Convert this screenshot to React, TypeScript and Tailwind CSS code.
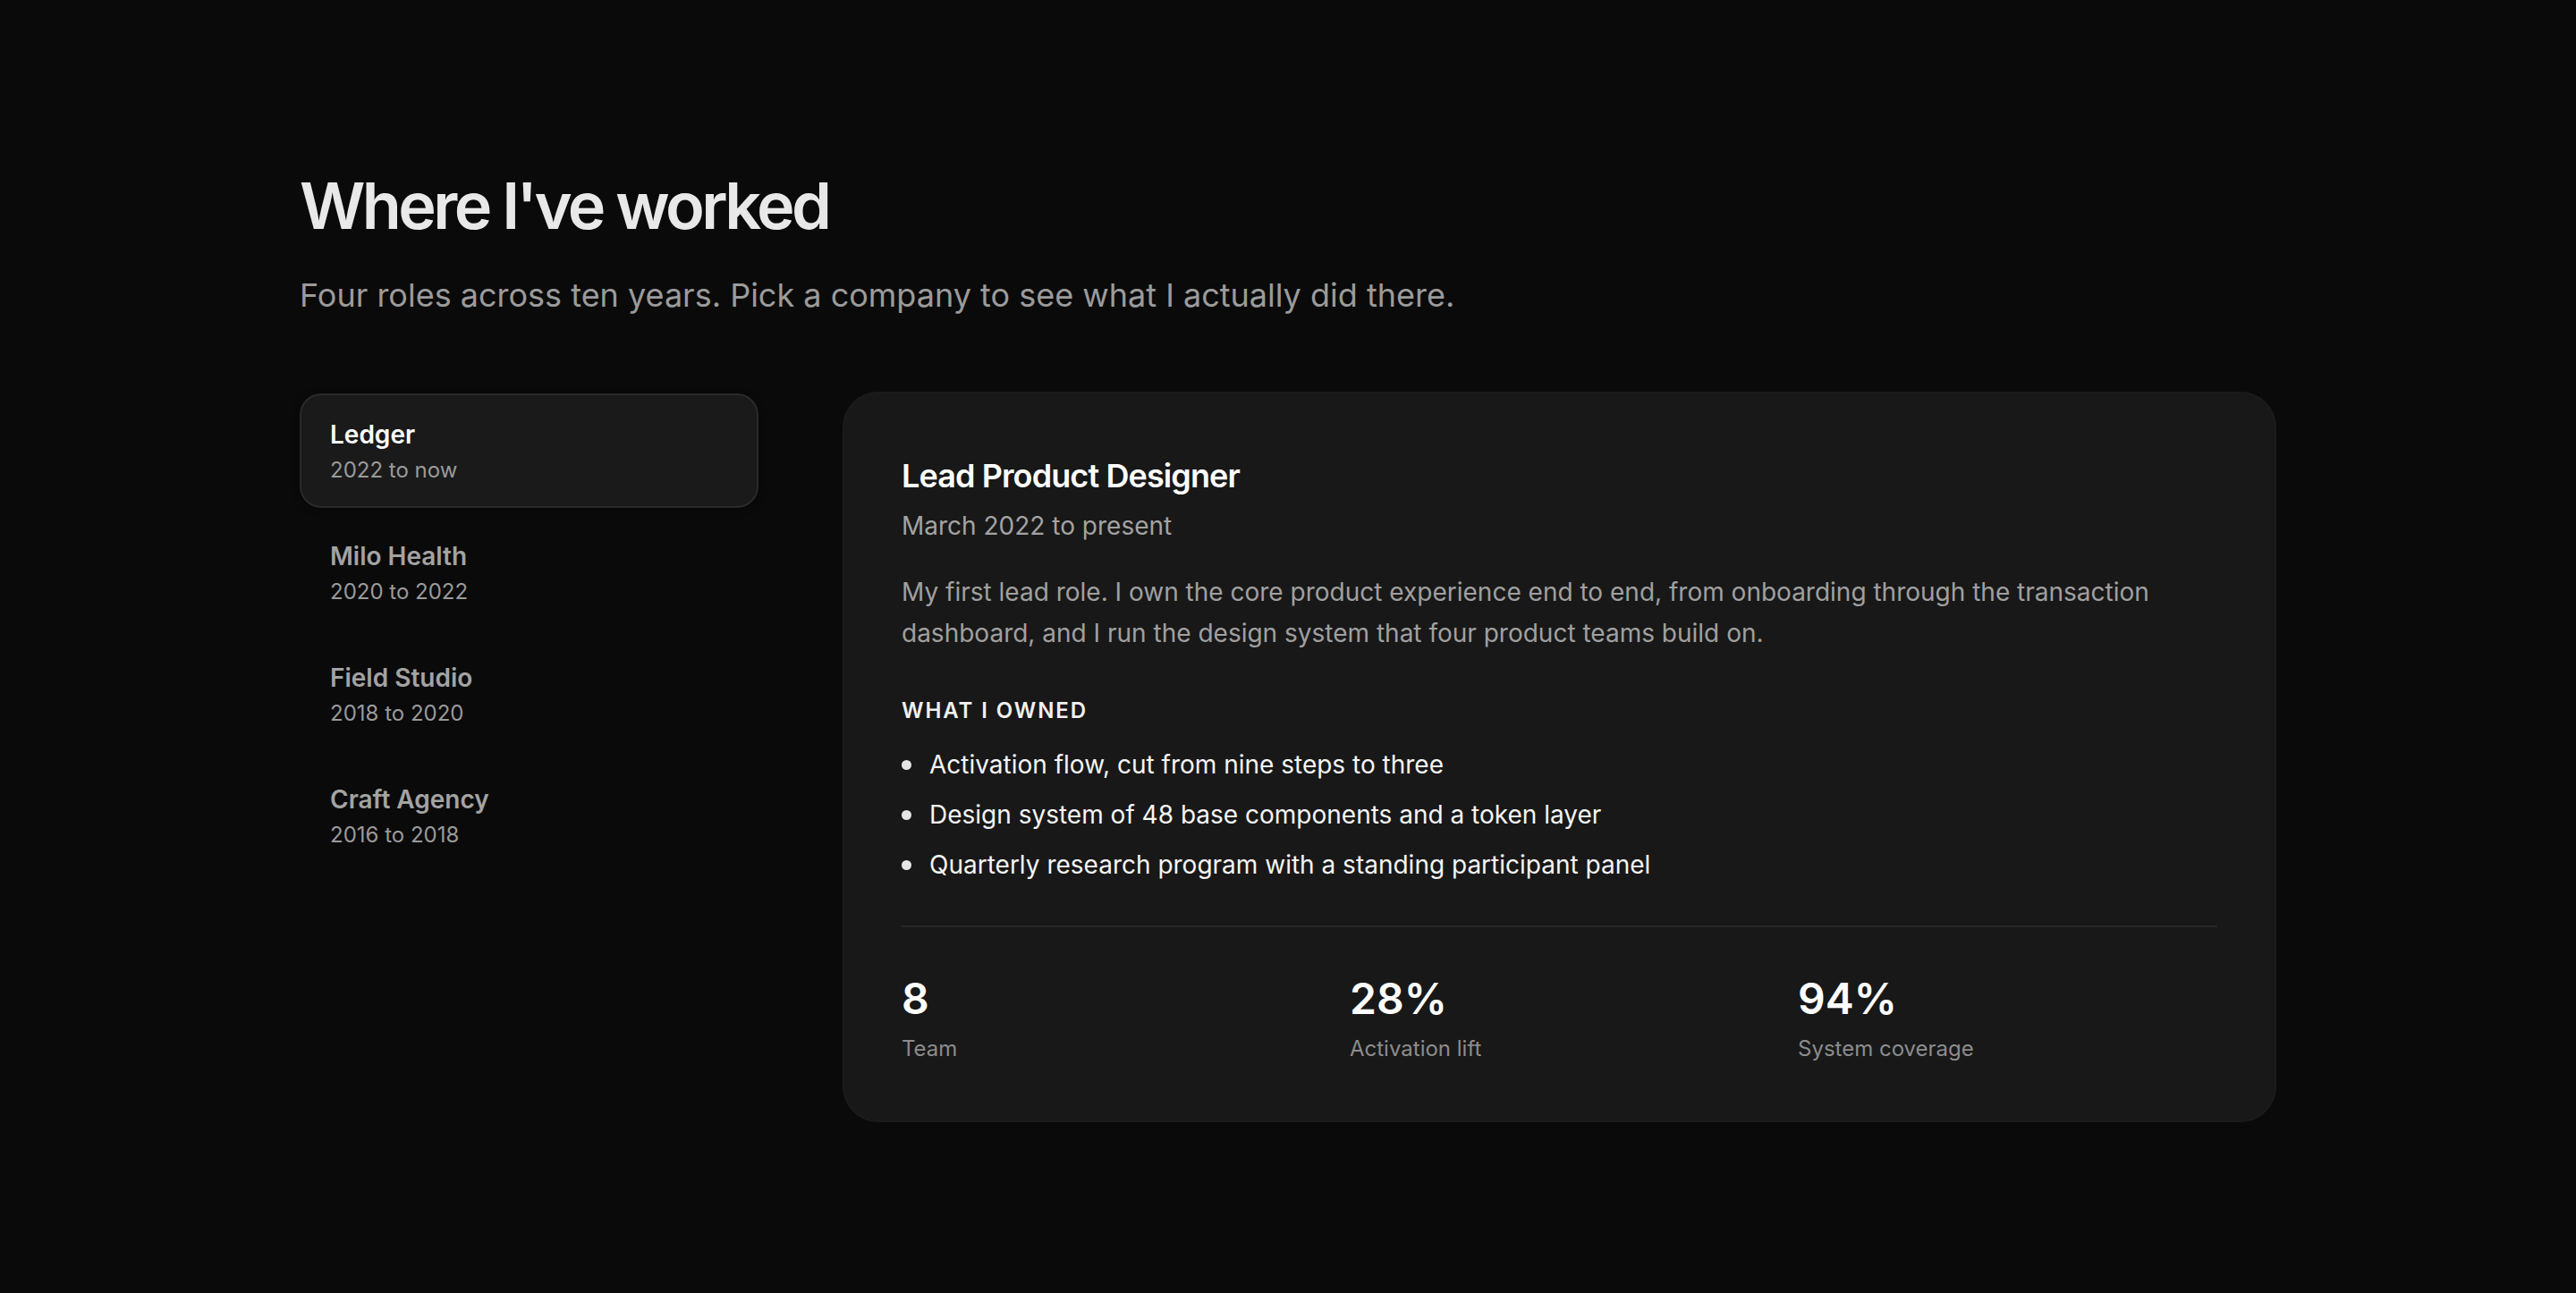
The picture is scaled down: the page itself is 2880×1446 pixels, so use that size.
import { useState } from "react";

const companies = [
  { name: "Ledger", years: "2022 to now" },
  { name: "Milo Health", years: "2020 to 2022" },
  { name: "Field Studio", years: "2018 to 2020" },
  { name: "Craft Agency", years: "2016 to 2018" },
];

const owned = [
  "Activation flow, cut from nine steps to three",
  "Design system of 48 base components and a token layer",
  "Quarterly research program with a standing participant panel",
];

const stats = [
  { value: "8", label: "Team" },
  { value: "28%", label: "Activation lift" },
  { value: "94%", label: "System coverage" },
];

export default function App() {
  const [active, setActive] = useState(0);

  return (
    <div className="min-h-screen bg-[#0a0a0a] font-['Inter',sans-serif] antialiased">
      <section className="mx-auto w-[2210px] pt-[190px] pb-[190px]">
        <h1 className="text-[72px] leading-[80px] font-semibold tracking-[-0.05em] text-[#e8e8e8]">
          Where I've worked
        </h1>
        <p className="mt-[36px] text-[36px] leading-[48px] text-[#9b9b9b]">
          Four roles across ten years. Pick a company to see what I actually did there.
        </p>

        <div className="mt-[84px] grid grid-cols-[513px_1fr] items-start gap-[94px]">
          <nav className="mt-[2px] flex flex-col gap-2">
            {companies.map((c, i) => (
              <button
                key={c.name}
                onClick={() => setActive(i)}
                className={
                  i === active
                    ? "rounded-[24px] border-2 border-[#2a2a2a] bg-[#1a1a1a] px-8 py-6 text-left shadow-[0_2px_8px_rgba(0,0,0,0.4)]"
                    : "rounded-[24px] border-2 border-transparent px-8 py-6 text-left"
                }
              >
                <div
                  className={
                    i === active
                      ? "text-[28px] leading-[40px] font-semibold text-white"
                      : "text-[28px] leading-[40px] font-semibold text-[#a3a3a3]"
                  }
                >
                  {c.name}
                </div>
                <div className="mt-1 text-[24px] leading-[32px] text-[#9a9a9a]">{c.years}</div>
              </button>
            ))}
          </nav>

          <article className="rounded-[40px] border-2 border-[#1b1b1b] bg-[#181818] p-16">
            <h2 className="text-[36px] leading-[56px] font-semibold tracking-[-0.025em] text-white">
              Lead Product Designer
            </h2>
            <p className="mt-2 text-[28px] leading-[40px] text-[#a3a3a3]">March 2022 to present</p>
            <p className="mt-8 text-[28px] leading-[45.5px] text-[#a0a0a0]">
              My first lead role. I own the core product experience end to end, from onboarding through the
              transaction dashboard, and I run the design system that four product teams build on.
            </p>

            <h3 className="mt-12 text-[24px] leading-[32px] font-semibold tracking-[0.08em] text-[#f0f0f0]">
              WHAT I OWNED
            </h3>
            <ul className="mt-6 flex flex-col gap-4">
              {owned.map(item => (
                <li key={item} className="flex items-center gap-5 text-[28px] leading-[40px] text-[#f5f5f5]">
                  <span className="h-[11px] w-[11px] shrink-0 rounded-full bg-[#e5e5e5]" />
                  {item}
                </li>
              ))}
            </ul>

            <div className="mt-12 grid grid-cols-3 gap-8 border-t-2 border-[#262626] pt-12">
              {stats.map(s => (
                <div key={s.label}>
                  <div className="text-[48px] leading-[64px] font-semibold text-white">{s.value}</div>
                  <div className="mt-2 text-[24px] leading-[32px] text-[#8c8c8c]">{s.label}</div>
                </div>
              ))}
            </div>
          </article>
        </div>
      </section>
    </div>
  );
}
